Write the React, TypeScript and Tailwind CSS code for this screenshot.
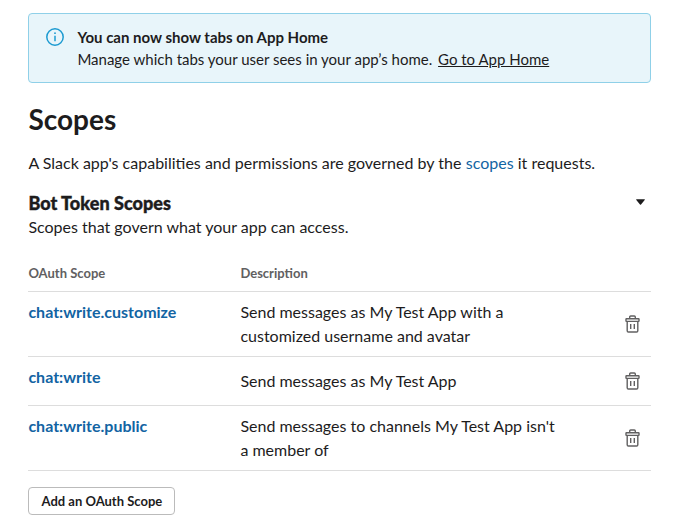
import React from 'react';

function Trash() {
  return (
    <svg className="block h-[18px] w-[15px]" viewBox="0 0 15 18" fill="none" stroke="#616061" strokeWidth="1.4" strokeLinejoin="round">
      <path d="M4.7 3.7V2q0-1 1-1h3.6q1 0 1 1v1.7" />
      <rect x="1" y="3.8" width="13" height="2.6" rx=".4" />
      <path d="M2.2 6.5v9.3q0 1.2 1.2 1.2h8.2q1.2 0 1.2-1.2V6.5M5.7 9v5M9.3 9v5" />
    </svg>
  );
}

const rows = [
  { scope: 'chat:write.customize', lines: ['Send messages as My Test App with a', 'customized username and avatar'], row: 'h-[65px]', desc: 'pt-2' },
  { scope: 'chat:write', lines: ['Send messages as My Test App'], row: 'h-[49px]', desc: 'pt-3' },
  { scope: 'chat:write.public', lines: ["Send messages to channels My Test App isn't", 'a member of'], row: 'h-[65px]', desc: 'pt-2' },
];

export default function App() {
  return (
    <main className="h-[525px] w-[678px] overflow-hidden bg-white pl-[28.4px] pt-[13px] font-['Lato',sans-serif] text-base leading-6 text-[#1d1c1d]">
      <section className="flex h-[70px] w-[623px] rounded-[4px] border border-[#8fd0e8] bg-[#e8f5fa] pl-[17px] pt-3 text-[15px]">
        <svg className="mt-[2px] h-[18px] w-[18px]" viewBox="0 0 18 18" fill="none" stroke="#1d9bd1" strokeWidth="1.5">
          <circle cx="9" cy="9" r="8.2" />
          <path d="M9 7.7v5.6" />
          <circle cx="9" cy="5.2" r="0.9" fill="#1d9bd1" stroke="none" />
        </svg>
        <div className="ml-[13px] leading-[22px]">
          <h2 className="font-bold">You can now show tabs on App Home</h2>
          <p>Manage which tabs your user sees in your app’s home. <a className="ml-0.5 underline">Go to App Home</a></p>
        </div>
      </section>
      <h1 className="mt-[18px] text-[28px] font-bold leading-9">Scopes</h1>
      <p className="mt-[14px]">A Slack app's capabilities and permissions are governed by the <a className="ml-[0.4px] text-[#1264a3]">scopes</a> it requests.</p>
      <div className="mt-4 flex h-6 w-[623px] items-center justify-between">
        <h2 className="text-lg font-black tracking-[0.04px] [-webkit-text-stroke:0.4px_#1d1c1d]">Bot Token Scopes</h2>
        <svg className="mb-[3px] mr-[6px] h-[6px] w-[9px]" viewBox="0 0 9 6" fill="#1d1c1d"><path d="M.5.3h8q.6.3.2.8L5 5.5q-.5.5-1 0L.3 1.1Q-.1.6.5.3Z" /></svg>
      </div>
      <p>Scopes that govern what your app can access.</p>
      <section className="mt-[22px] w-[623px]">
        <div className="flex h-[31px] border-b border-[#dddddd] text-[13px] font-bold leading-6 text-[#616061]">
          <span className="w-[212px]">OAuth Scope</span><span>Description</span>
        </div>
        {rows.map((r) => (
          <div key={r.scope} className={`flex border-b border-[#dddddd] ${r.row}`}>
            <b className="w-[212px] pt-2 text-[#1264a3]">{r.scope}</b>
            <div className={`grow ${r.desc}`}>{r.lines.map((l) => <p key={l}>{l}</p>)}</div>
            <div className="mr-[11px] flex items-center"><Trash /></div>
          </div>
        ))}
      </section>
      <button className="mt-4 block h-7 w-[147px] rounded-[4px] border border-[#bbbbbb] text-[13px] font-bold">Add an OAuth Scope</button>
    </main>
  );
}
